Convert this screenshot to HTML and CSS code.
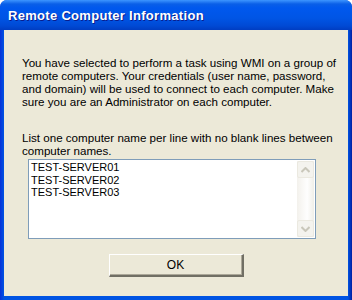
FILE: index.html
```html
<!DOCTYPE html>
<html lang="en">
<head>
  <meta charset="UTF-8" />
  <title>Remote Computer Information</title>
  <link rel="stylesheet" href="styles.css">
</head>
<body>
  <div class="window">
    <div class="titulo">Remote Computer Information</div>

    <div class="cliente">
      <p class="texto">You have selected to perform a task using WMI on a group of<br>
        remote computers. Your credentials (user name, password,<br>
        and domain) will be used to connect to each computer. Make<br>
        sure you are an Administrator on each computer.</p>

      <p class="texto segundo">List one computer name per line with no blank lines between<br>
        computer names.</p>

      <div class="lista">
        <div class="linhas">
          <div>TEST-SERVER01</div>
          <div>TEST-SERVER02</div>
          <div>TEST-SERVER03</div>
        </div>
        <div class="rolagem">
          <div class="seta">
            <svg width="9" height="6" viewBox="0 0 9 6"><path d="M0.5 5 L4.5 1 L8.5 5" fill="none" stroke="#c9c7ba" stroke-width="2"/></svg>
          </div>
          <div class="trilho"></div>
          <div class="seta">
            <svg width="9" height="6" viewBox="0 0 9 6"><path d="M0.5 1 L4.5 5 L8.5 1" fill="none" stroke="#c9c7ba" stroke-width="2"/></svg>
          </div>
        </div>
      </div>

      <div class="rodape">
        <button class="ok">OK</button>
      </div>
    </div>
  </div>
</body>
</html>
```

FILE: styles.css
```css
body {
  margin: 0;
  background: #ffffff;
  font-family: 'Liberation Sans', Arial, sans-serif;
}

.window {
  width: 352px;
  height: 300px;
  box-sizing: border-box;
  background: linear-gradient(to right, #0831d9, #0054e3 4px, #0054e3 calc(100% - 4px), #001ea0);
  border-radius: 7px 7px 0 0;
  display: flex;
  flex-direction: column;
  overflow: hidden;
}

.titulo {
  height: 30px;
  flex: none;
  box-sizing: border-box;
  padding: 0 0 0 8px;
  line-height: 32px;
  color: #ffffff;
  font-weight: bold;
  font-size: 13px;
  letter-spacing: 0.3px;
  text-shadow: 1px 1px 0 #0a1c8c;
  background: linear-gradient(to bottom, #3d95ff 0px, #0a5fe8 4px, #0058ee 8px, #0055e5 18px, #0049d4 26px, #003dc2 30px);
}

.cliente {
  flex: 1;
  margin: 0 4px 4px;
  background: #ece9d8;
  padding: 26px 4px 0 18px;
  display: flex;
  flex-direction: column;
}

.texto {
  margin: 0;
  font-size: 11.6px;
  line-height: 13px;
  color: #000000;
  white-space: nowrap;
}

.segundo {
  margin-top: 23px;
}

.lista {
  margin: 2px 0 0 6px;
  width: 288px;
  height: 80px;
  box-sizing: border-box;
  border: 1px solid #7f9db9;
  background: #ffffff;
  display: flex;
}

.linhas {
  flex: 1;
  padding: 1px 0 0 2px;
  font-size: 11px;
  line-height: 12.5px;
  color: #000000;
}

.rolagem {
  width: 17px;
  margin: 1px 1px 1px 0;
  display: flex;
  flex-direction: column;
  background: linear-gradient(to right, #f3f1ec, #fefefe 60%, #f0efe8);
}

.seta {
  height: 17px;
  box-sizing: border-box;
  border: 1px solid #ebe9e0;
  border-radius: 2px;
  background: #f4f3ee;
  display: flex;
  align-items: center;
  justify-content: center;
}

.trilho {
  flex: 1;
}

.rodape {
  display: flex;
  justify-content: center;
  padding: 15px 14px 0 0;
}

.ok {
  width: 135px;
  height: 23px;
  box-sizing: border-box;
  background: #ece9d8;
  font-family: 'Liberation Sans', Arial, sans-serif;
  font-size: 12px;
  color: #000000;
  border-top: 1px solid #ffffff;
  border-left: 1px solid #ffffff;
  border-right: 2px solid #716f64;
  border-bottom: 2px solid #716f64;
  box-shadow: inset -1px -1px 0 #aca899;
  padding: 0;
}
```
